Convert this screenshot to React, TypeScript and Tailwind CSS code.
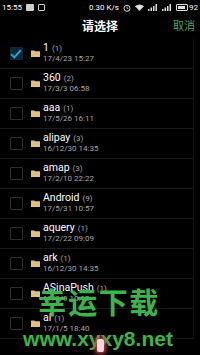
import React from 'react'

type Entry = { name: string; count: number; date: string; checked?: boolean }

const entries: Entry[] = [
  { name: '1', count: 1, date: '17/4/23 15:27', checked: true },
  { name: '360', count: 2, date: '17/3/3 06:58' },
  { name: 'aaa', count: 1, date: '17/5/26 16:11' },
  { name: 'alipay', count: 3, date: '16/12/30 14:35' },
  { name: 'amap', count: 3, date: '17/2/10 22:22' },
  { name: 'Android', count: 9, date: '17/5/31 10:57' },
  { name: 'aquery', count: 1, date: '17/2/22 09:09' },
  { name: 'ark', count: 1, date: '16/12/30 14:35' },
  { name: 'ASinaPush', count: 1, date: '17/3/9 10:12' },
  { name: 'al', count: 1, date: '17/1/5 18:40' },
]

const StatusBar: React.FC = () => (
  <div className="flex h-[15px] items-center justify-between px-[2px] text-[8px] leading-none text-white">
    <div className="flex items-center gap-[4px]">
      <span>15:55</span>
      <span className="h-[7px] w-[8px] rounded-[1px] bg-[#cfcfcf]" />
      <span className="h-[7px] w-[7px] rounded-[1px] border border-[#cfcfcf]" />
    </div>
    <div className="flex items-center gap-[4px]">
      <span>0.30 K/s</span>
      <svg width="8" height="8" viewBox="0 0 8 8">
        <circle cx="4" cy="4.3" r="3" fill="none" stroke="#ddd" strokeWidth="1" />
        <path d="M4 2.6V4.4H5.3" fill="none" stroke="#ddd" strokeWidth="0.8" />
      </svg>
      <svg width="9" height="7" viewBox="0 0 9 7">
        <path d="M4.5 7L0 2.2Q4.5 -1.4 9 2.2Z" fill="#ddd" />
      </svg>
      <svg width="10" height="7" viewBox="0 0 10 7">
        <rect x="0" y="5" width="1.5" height="2" fill="#ddd" />
        <rect x="2.5" y="3.5" width="1.5" height="3.5" fill="#ddd" />
        <rect x="5" y="2" width="1.5" height="5" fill="#ddd" />
        <rect x="7.5" y="0" width="1.5" height="7" fill="#ddd" />
      </svg>
      <svg width="10" height="7" viewBox="0 0 10 7">
        <rect x="0" y="5" width="1.5" height="2" fill="#ddd" />
        <rect x="2.5" y="3.5" width="1.5" height="3.5" fill="#ddd" />
        <rect x="5" y="2" width="1.5" height="5" fill="#ddd" />
        <rect x="7.5" y="0" width="1.5" height="7" fill="#ddd" />
      </svg>
      <div className="flex items-center gap-[1px]">
        <span className="flex h-[7px] w-[12px] items-center rounded-[1px] border border-[#ddd] p-[1px]">
          <span className="h-full w-[88%] bg-[#ddd]" />
        </span>
        <span>92</span>
      </div>
    </div>
  </div>
)

const Folder: React.FC = () => (
  <svg width="9" height="7" viewBox="0 0 9 7" className="shrink-0">
    <path d="M0 0.5H3.2L4 1.3H9V7H0Z" fill="#e5bf7e" />
  </svg>
)

const Checkbox: React.FC<{ checked?: boolean }> = ({ checked }) =>
  checked ? (
    <div className="flex h-[13px] w-[13px] items-center justify-center rounded-[1px] bg-[#0d2736]">
      <svg width="12" height="10" viewBox="0 0 12 10">
        <path d="M1.2 5.3L4.4 8.4L10.8 1.2" fill="none" stroke="#2f9fd8" strokeWidth="2" />
      </svg>
    </div>
  ) : (
    <div className="h-[13px] w-[13px] rounded-[1px] border border-[#2e2e2e]" />
  )

const Row: React.FC<{ entry: Entry }> = ({ entry }) => (
  <div className="flex h-[30px] border-b border-[#1b1b1b]">
    <div className="flex w-[31px] items-center justify-center pl-[1px]">
      <Checkbox checked={entry.checked} />
    </div>
    <div className="flex w-[12px] items-center">
      <Folder />
    </div>
    <div className="flex flex-col pt-[3px]">
      <div className="flex items-baseline gap-[3px] leading-[11px]">
        <span className="text-[10.5px] text-white">{entry.name}</span>
        <span className="text-[8px] text-[#a8a8a8]">({entry.count})</span>
      </div>
      <span className="text-[8px] leading-[10px] text-[#a8a8a8]">{entry.date}</span>
    </div>
  </div>
)

const App: React.FC = () => (
  <div
    className="relative h-[355px] w-[200px] overflow-hidden bg-black"
    style={{ fontFamily: 'Roboto, "Noto Sans CJK SC", sans-serif' }}
  >
    <StatusBar />
    <div className="relative flex h-[24px] items-center justify-center">
      <span className="text-[12px] font-bold text-white">请选择</span>
      <span className="absolute right-[5px] text-[11px] text-[#4aa35c]">取消</span>
    </div>
    <div className="mr-[6px] border-r border-[#141414]">
      {entries.map((entry) => (
        <Row key={entry.name} entry={entry} />
      ))}
    </div>
    <div className="pointer-events-none absolute left-0 top-[290px] flex w-[196px] flex-col items-center">
      <div className="flex text-[29px] font-bold leading-none text-[#3cb44a]">
        {['幸', '运', '下', '载'].map((c) => (
          <span key={c} className="w-[30.5px] text-center">
            {c}
          </span>
        ))}
      </div>
      <span
        className="mt-[9px] text-[21px] font-bold leading-none text-[#3cb44a]"
        style={{ fontFamily: '"Liberation Sans", sans-serif' }}
      >
        www.xyxy8.net
      </span>
    </div>
    <div className="absolute left-[97px] top-[339px] h-[13px] w-[7px] rounded-[2px] bg-[#f4d6dc] shadow-[0_0_4px_2px_#c0404f]" />
  </div>
)

export default App
